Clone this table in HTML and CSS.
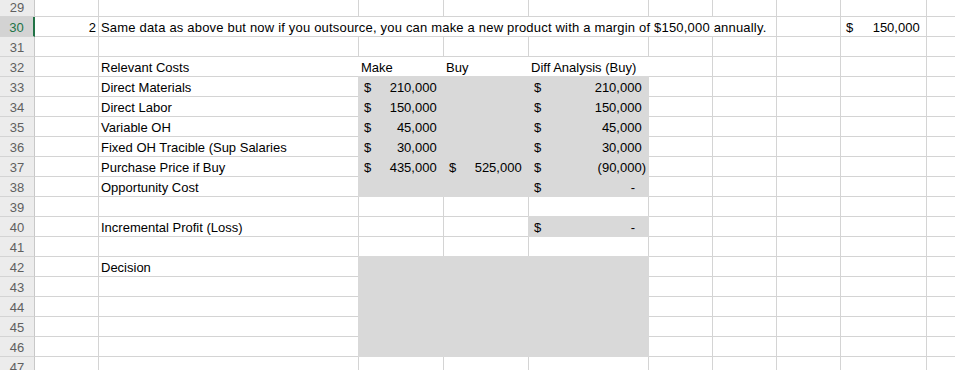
FILE: index.html
```html
<!DOCTYPE html>
<html>
<head>
<meta charset="utf-8">
<link rel="stylesheet" href="styles.css">
</head>
<body>
<div class="sheet">
  <!-- 29 -->
  <div class="c h">29</div><div class="c"></div><div class="c"></div><div class="c"></div><div class="c"></div><div class="c"></div><div class="c"></div><div class="c"></div><div class="c"></div><div class="c"></div><div class="c"></div>
  <!-- 30 -->
  <div class="c h sel">30</div><div class="c r">2</div><div class="c span6 note">Same data as above but now if you outsource, you can make a new product with a margin of $150,000 annually.</div><div class="c"></div><div class="c acc"><span>$</span><span>150,000<i class="p">)</i></span></div><div class="c"></div>
  <!-- 31 -->
  <div class="c h">31</div><div class="c"></div><div class="c"></div><div class="c"></div><div class="c"></div><div class="c"></div><div class="c"></div><div class="c"></div><div class="c"></div><div class="c"></div><div class="c"></div>
  <!-- 32 -->
  <div class="c h">32</div><div class="c"></div><div class="c">Relevant Costs</div><div class="c w">Make</div><div class="c w">Buy</div><div class="c w">Diff Analysis (Buy)</div><div class="c"></div><div class="c"></div><div class="c"></div><div class="c"></div><div class="c"></div>
  <!-- 33 -->
  <div class="c h">33</div><div class="c"></div><div class="c">Direct Materials</div><div class="c g acc"><span>$</span><span>210,000<i class="p">)</i></span></div><div class="c g"></div><div class="c g acc"><span>$</span><span>210,000<i class="p">)</i></span></div><div class="c"></div><div class="c"></div><div class="c"></div><div class="c"></div><div class="c"></div>
  <!-- 34 -->
  <div class="c h">34</div><div class="c"></div><div class="c">Direct Labor</div><div class="c g acc"><span>$</span><span>150,000<i class="p">)</i></span></div><div class="c g"></div><div class="c g acc"><span>$</span><span>150,000<i class="p">)</i></span></div><div class="c"></div><div class="c"></div><div class="c"></div><div class="c"></div><div class="c"></div>
  <!-- 35 -->
  <div class="c h">35</div><div class="c"></div><div class="c">Variable OH</div><div class="c g acc"><span>$</span><span>45,000<i class="p">)</i></span></div><div class="c g"></div><div class="c g acc"><span>$</span><span>45,000<i class="p">)</i></span></div><div class="c"></div><div class="c"></div><div class="c"></div><div class="c"></div><div class="c"></div>
  <!-- 36 -->
  <div class="c h">36</div><div class="c"></div><div class="c">Fixed OH Tracible (Sup Salaries</div><div class="c g acc"><span>$</span><span>30,000<i class="p">)</i></span></div><div class="c g"></div><div class="c g acc"><span>$</span><span>30,000<i class="p">)</i></span></div><div class="c"></div><div class="c"></div><div class="c"></div><div class="c"></div><div class="c"></div>
  <!-- 37 -->
  <div class="c h">37</div><div class="c"></div><div class="c">Purchase Price if Buy</div><div class="c g acc"><span>$</span><span>435,000<i class="p">)</i></span></div><div class="c g acc"><span>$</span><span>525,000<i class="p">)</i></span></div><div class="c g acc"><span>$</span><span>(90,000)</span></div><div class="c"></div><div class="c"></div><div class="c"></div><div class="c"></div><div class="c"></div>
  <!-- 38 -->
  <div class="c h">38</div><div class="c"></div><div class="c">Opportunity Cost</div><div class="c g"></div><div class="c g"></div><div class="c g acc"><span>$</span><span class="z">-</span></div><div class="c"></div><div class="c"></div><div class="c"></div><div class="c"></div><div class="c"></div>
  <!-- 39 -->
  <div class="c h">39</div><div class="c"></div><div class="c"></div><div class="c"></div><div class="c"></div><div class="c"></div><div class="c"></div><div class="c"></div><div class="c"></div><div class="c"></div><div class="c"></div>
  <!-- 40 -->
  <div class="c h">40</div><div class="c"></div><div class="c">Incremental Profit (Loss)</div><div class="c"></div><div class="c"></div><div class="c g acc"><span>$</span><span class="z">-</span></div><div class="c"></div><div class="c"></div><div class="c"></div><div class="c"></div><div class="c"></div>
  <!-- 41 -->
  <div class="c h">41</div><div class="c"></div><div class="c"></div><div class="c"></div><div class="c"></div><div class="c"></div><div class="c"></div><div class="c"></div><div class="c"></div><div class="c"></div><div class="c"></div>
  <!-- 42 -->
  <div class="c h">42</div><div class="c"></div><div class="c">Decision</div><div class="c g"></div><div class="c g"></div><div class="c g"></div><div class="c"></div><div class="c"></div><div class="c"></div><div class="c"></div><div class="c"></div>
  <!-- 43 -->
  <div class="c h">43</div><div class="c"></div><div class="c"></div><div class="c g"></div><div class="c g"></div><div class="c g"></div><div class="c"></div><div class="c"></div><div class="c"></div><div class="c"></div><div class="c"></div>
  <!-- 44 -->
  <div class="c h">44</div><div class="c"></div><div class="c"></div><div class="c g"></div><div class="c g"></div><div class="c g"></div><div class="c"></div><div class="c"></div><div class="c"></div><div class="c"></div><div class="c"></div>
  <!-- 45 -->
  <div class="c h">45</div><div class="c"></div><div class="c"></div><div class="c g"></div><div class="c g"></div><div class="c g"></div><div class="c"></div><div class="c"></div><div class="c"></div><div class="c"></div><div class="c"></div>
  <!-- 46 -->
  <div class="c h">46</div><div class="c"></div><div class="c"></div><div class="c g"></div><div class="c g"></div><div class="c g"></div><div class="c"></div><div class="c"></div><div class="c"></div><div class="c"></div><div class="c"></div>
  <!-- 47 -->
  <div class="c h">47</div><div class="c"></div><div class="c"></div><div class="c"></div><div class="c"></div><div class="c"></div><div class="c"></div><div class="c"></div><div class="c"></div><div class="c"></div><div class="c"></div>
</div>
</body>
</html>
```

FILE: styles.css
```css
html, body {
  margin: 0;
  padding: 0;
  background: #ffffff;
  overflow: hidden;
}

body {
  font-family: "Liberation Sans", Arial, sans-serif;
  font-size: 13px;
  color: #000000;
}

.sheet {
  display: grid;
  grid-template-columns: 35px 64px 260px 85px 85px 120px 64px 64px 64px 86px 64px;
  grid-auto-rows: 20px;
  margin-top: -3px;
}

.c {
  box-sizing: border-box;
  border-right: 1px solid #d4d4d4;
  border-bottom: 1px solid #d4d4d4;
  padding: 1px 2px 0 2px;
  line-height: 19px;
  white-space: nowrap;
  overflow: visible;
}

.h {
  background: #ececec;
  border-right-color: #c8c8c8;
  color: #5f5f5f;
  text-align: center;
  padding-left: 0;
  padding-right: 0;
}

.h.sel {
  background: #d3d3d3;
  border-right: 2px solid #217346;
  color: #217346;
}

.r {
  text-align: right;
}

.span6 {
  grid-column: span 6;
}

.note {
  letter-spacing: 0.19px;
}

.w {
  background: #ffffff;
  border-right-color: #ffffff;
  box-shadow: -1px 0 0 #ffffff;
}

.g {
  background: #d9d9d9;
  border-right-color: #d9d9d9;
  border-bottom-color: #d9d9d9;
  box-shadow: -1px -1px 0 #d9d9d9, -1px 0 0 #d9d9d9, 0 -1px 0 #d9d9d9;
}

.acc {
  display: flex;
  justify-content: space-between;
  padding-left: 5px;
  padding-right: 2px;
}

.p {
  visibility: hidden;
  font-style: normal;
}

.z {
  padding-right: 11px;
}
```
